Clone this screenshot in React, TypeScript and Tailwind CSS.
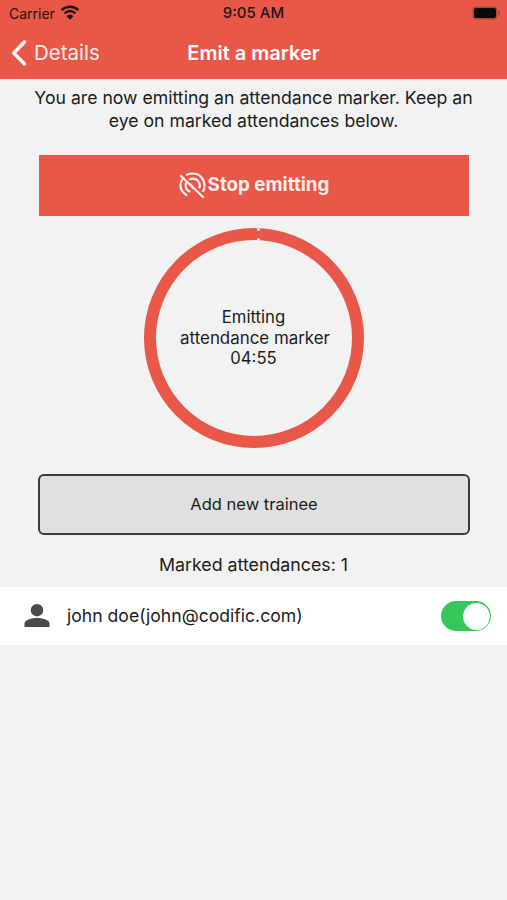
import React from 'react';

const WifiIcon = () => (
    <svg className="w-[20px] h-[15px] mb-[3px]" viewBox="0 0 20 15" fill="none" stroke="#241512" strokeLinecap="butt">
        <path d="M1.5 5.2C6.6 0.6 13.4 0.6 18.5 5.2" strokeWidth="2.4" />
        <path d="M4.6 8.4C8 5.4 12 5.4 15.4 8.4" strokeWidth="2.4" />
        <path d="M7.6 11.3C9 10.1 11 10.1 12.4 11.3L10 13.8Z" fill="#241512" strokeWidth="1.4" />
    </svg>
);

const BatteryIcon = () => (
    <svg className="w-[29px] h-[14px] mb-[1px]" viewBox="0 0 29 14">
        <rect x="0.5" y="0.5" width="25" height="13" rx="3.5" fill="#a8473a" />
        <rect x="2" y="2" width="22" height="10" rx="2.2" fill="#0d0807" />
        <rect x="26.4" y="4.8" width="1.6" height="4.4" rx="0.8" fill="#a8473a" />
    </svg>
);

const NoSignalIcon = () => (
    <svg className="w-[27px] h-[27px]" viewBox="0 0 27 27" fill="none" stroke="#fdf0ec" strokeWidth="2.2" strokeLinecap="round">
        <path d="M2 4L24 25" />
        <path d="M7.5 23C3.5 20.5 1.5 17 1.5 13.5C1.5 11.5 2 9.5 3 8" />
        <path d="M8 2.8C10 1.8 12 1.5 14 1.5C20.5 1.5 25.5 7 25.5 13.5C25.5 15.5 25 17.5 24.2 19" />
        <path d="M11 7.2C12 6.8 13 6.6 14 6.6C17.8 6.6 20.8 9.8 20.8 13.5C20.8 14.2 20.7 14.8 20.5 15.4" />
        <path d="M10.5 19.5C8 18.2 6.6 15.8 6.6 13.5C6.6 12.6 6.8 11.8 7.1 11" />
        <path d="M14 15.5L11.5 12.5" />
    </svg>
);

const PersonIcon = () => (
    <svg className="w-[28px] h-[28px]" viewBox="0 0 28 28" fill="#4a4a4a">
        <circle cx="14" cy="8.2" r="6.2" />
        <path d="M1.5 25V21.5C1.5 17.8 9 16 14 16C19 16 26.5 17.8 26.5 21.5V25Z" />
    </svg>
);

const App: React.FC = () => {
    return (
        <div className="w-[507px] h-[900px] flex flex-col bg-[#f2f2f2] overflow-hidden font-['Inter','Liberation_Sans',sans-serif] text-[#1c1c1c]">
            {/* Status bar and nav */}
            <div className="h-[79px] shrink-0 bg-[#e95748] flex flex-col">
                <div className="h-[27px] pl-[9px] pr-[6px] flex items-center justify-between relative">
                    <div className="flex items-center gap-[5px] text-[#241512] text-[14px]">
                        <span>Carrier</span>
                        <WifiIcon />
                    </div>
                    <span className="absolute left-0 right-0 text-center text-[#241512] text-[15px] font-medium">9:05 AM</span>
                    <BatteryIcon />
                </div>
                <div className="flex-1 flex items-center relative pb-[1px]">
                    <div className="flex items-center gap-[7px] pl-[11px] text-[#fdeeea] text-[20.5px] leading-none">
                        <svg className="w-[16px] h-[26px]" viewBox="0 0 16 26" fill="none" stroke="#ffffff" strokeWidth="3.4" strokeLinecap="round" strokeLinejoin="round">
                            <path d="M13.5 2L2.8 13L13.5 24" />
                        </svg>
                        <span className="mt-[2px]">Details</span>
                    </div>
                    <span className="absolute left-0 right-0 text-center text-white text-[20px] font-semibold leading-none">Emit a marker</span>
                </div>
            </div>

            {/* Body */}
            <p className="mt-[7px] px-[20px] text-center text-[17.65px] leading-[23px]">
                You are now emitting an attendance marker. Keep an eye on marked attendances below.
            </p>

            <div className="mt-[23px] ml-[39px] w-[430px] h-[61px] shrink-0 bg-[#e95748] flex items-center justify-center text-[#fdf0ec] text-[18.75px] font-bold">
                <NoSignalIcon />
                <span className="ml-[2px]">Stop emitting</span>
            </div>

            <div className="mt-[12px] self-center w-[220px] h-[220px] shrink-0 rounded-full border-[12px] border-[#e95748] flex flex-col items-center justify-center text-center text-[16.7px] leading-[20.5px] relative">
                {/* Seam where the countdown ring starts and ends */}
                <span className="absolute top-[-12px] left-[101px] w-[3px] h-[3px] rounded-full bg-[#f2f2f2]" />
                <span className="absolute top-[-2px] left-[101px] w-[3px] h-[3px] rounded-full bg-[#f2f2f2]" />
                <span>Emitting</span>
                <span className="ml-[3px] text-[16.9px]">attendance marker</span>
                <span>04:55</span>
            </div>

            <div className="mt-[26px] ml-[38px] w-[432px] h-[61px] shrink-0 rounded-[6px] border-2 border-[#3c3c3c] bg-[#e0e0e0] flex items-center justify-center text-[16.5px]">
                Add new trainee
            </div>

            <p className="mt-[19px] text-center text-[17.8px] leading-[22px]">Marked attendances: 1</p>

            <div className="mt-[11px] h-[58px] shrink-0 bg-white flex items-center pl-[23px] pr-[16px]">
                <PersonIcon />
                <span className="ml-[16px] text-[17.6px] flex-1">john doe(john@codific.com)</span>
                <div className="w-[50px] h-[30px] rounded-full bg-[#34c759] flex items-center justify-end pr-[1.5px]">
                    <div className="w-[27px] h-[27px] rounded-full bg-white" />
                </div>
            </div>
        </div>
    );
};

export default App;
